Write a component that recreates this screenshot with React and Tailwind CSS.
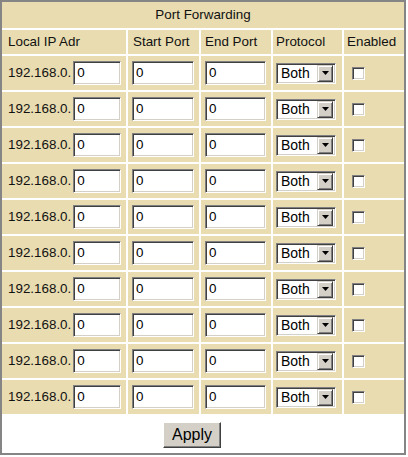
import React from 'react';

const ROWS = Array.from({ length: 10 }, (_, i) => i);

const inset = 'border border-t-[#808080] border-l-[#808080] border-b-white border-r-white shadow-[inset_1px_1px_0_#404040,inset_-1px_-1px_0_#d4d0c8]';

const TextBox = ({ w }) => (
  <div className={`${inset} h-[24px] bg-white flex items-center pl-[3px] text-[13.4px] text-black ${w}`}>
    0
  </div>
);

const BothSelect = () => (
  <div className={`${inset} w-[60px] h-[21px] bg-white flex items-center justify-between pl-[4px] pr-[2px] text-[14px] text-black`}>
    <span>Both</span>
    <div className="w-[16px] h-[17px] bg-[#d4d0c8] border border-t-[#d4d0c8] border-l-[#d4d0c8] border-b-[#404040] border-r-[#404040] shadow-[inset_1px_1px_0_#fff,inset_-1px_-1px_0_#808080] flex items-center justify-center">
      <svg width="7" height="4" viewBox="0 0 7 4">
        <path d="M0 0h7L3.5 4z" fill="#000" />
      </svg>
    </div>
  </div>
);

const CheckBox = () => (
  <div className={`${inset} w-[13px] h-[13px] bg-white`} />
);

export default function App() {
  return (
    <div className="bg-white w-[408px] h-[457px]" style={{ fontFamily: '"Liberation Sans", Arial, sans-serif' }}>
      <div className="w-[406px] h-[455px] border-2 border-[#858585] text-[13.4px] text-[#111]">
        <div className="grid grid-cols-[124px_71px_70px_69px_60px] gap-[2px]">
          <div className="col-span-5 h-[26px] bg-[#e8dcb0] flex items-center justify-center">
            Port Forwarding
          </div>

          <div className="h-[24px] bg-[#e8dcb0] flex items-center pl-[6px]">Local IP Adr</div>
          <div className="h-[24px] bg-[#e8dcb0] flex items-center pl-[5px]">Start Port</div>
          <div className="h-[24px] bg-[#e8dcb0] flex items-center pl-[4px]">End Port</div>
          <div className="h-[24px] bg-[#e8dcb0] flex items-center pl-[3px]">Protocol</div>
          <div className="h-[24px] bg-[#e8dcb0] flex items-center pl-[3px]">Enabled</div>

          {ROWS.map(i => (
            <React.Fragment key={i}>
              <div className="h-[34px] bg-[#e8dcb0] flex items-center pl-[6px]">
                <span className="mr-[2px]">192.168.0.</span>
                <TextBox w="w-[48px]" />
              </div>
              <div className="h-[34px] bg-[#e8dcb0] flex items-center pl-[4px]">
                <TextBox w="w-[62px]" />
              </div>
              <div className="h-[34px] bg-[#e8dcb0] flex items-center pl-[4px]">
                <TextBox w="w-[61px]" />
              </div>
              <div className="h-[34px] bg-[#e8dcb0] flex items-center pl-[3px]">
                <BothSelect />
              </div>
              <div className="h-[34px] bg-[#e8dcb0] flex items-center pl-[8px]">
                <CheckBox />
              </div>
            </React.Fragment>
          ))}

          <div className="col-span-5 h-[37px] flex items-center justify-center pr-[22px]">
            <button
              type="button"
              className="w-[58px] h-[26px] bg-[#d4d0c8] text-[16px] text-black border border-t-white border-l-white border-b-[#404040] border-r-[#404040] shadow-[inset_-1px_-1px_0_#808080]"
            >
              Apply
            </button>
          </div>
        </div>
      </div>
    </div>
  );
}
